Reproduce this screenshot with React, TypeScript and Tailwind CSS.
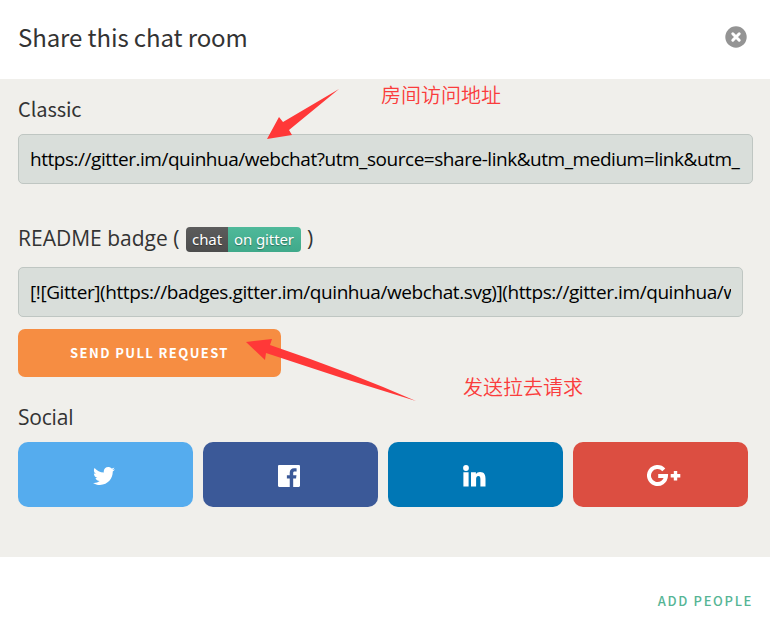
import type { ReactNode } from 'react';
import { FaTwitter } from 'react-icons/fa';

const heading = 'font-["Noto_Sans_CJK_SC",sans-serif]';
const ui = 'font-["Open_Sans","Noto_Sans",sans-serif]';

function ShareField({ value, className }: { value: string; className: string }) {
  return (
    <div className={`h-[50px] rounded-[5px] border border-[#bfc6c2] bg-[#d9deda] px-[11px] ${className}`}>
      <div className={`${ui} overflow-hidden whitespace-nowrap leading-[48px] text-black`}>{value}</div>
    </div>
  );
}

function SocialButton({ color, label, children }: { color: string; label: string; children: ReactNode }) {
  return (
    <button aria-label={label} className={`flex h-[65px] w-[175px] items-center justify-center rounded-[10px] text-white ${color}`}>
      {children}
    </button>
  );
}

export default function App() {
  return (
    <div className="relative flex h-[631px] w-[770px] flex-col overflow-hidden bg-white text-[#333]">
      <header className="flex h-[79px] items-center justify-between pr-[23px] pl-[18px] pb-[5px]">
        <h1 className={`${heading} text-[24px] leading-8 font-normal tracking-[-0.1px]`}>Share this chat room</h1>
        <button aria-label="Close">
          <svg width="22" height="22" viewBox="0 0 22 22">
            <circle cx="11" cy="11" r="10.7" fill="#949494" />
            <path d="M7.8 7.8l6.4 6.4M14.2 7.8l-6.4 6.4" stroke="#fff" strokeWidth="3" strokeLinecap="round" />
          </svg>
        </button>
      </header>

      <main className="h-[478px] bg-[#f0efeb] px-[18px] pt-[14px]">
        <h2 className={`${heading} h-[41px] text-[20px] leading-8 tracking-[-0.1px]`}>Classic</h2>
        <ShareField className="w-[735px] text-[19px] tracking-[-0.46px]" value="https://gitter.im/quinhua/webchat?utm_source=share-link&utm_medium=link&utm_" />

        <h2 className={`${ui} mt-[38px] flex h-[45px] items-start text-[21px] leading-8`}>
          <span className="w-[168px] whitespace-nowrap">README badge (</span>
          <span className="mt-[5px] flex h-[25px] overflow-hidden rounded-[4px] font-['Noto_Sans',sans-serif] text-[15px] leading-[25px] tracking-[-0.1px] text-white [text-shadow:0_1px_1px_rgba(0,0,0,0.35)]">
            <span className="w-[42px] bg-linear-to-b from-[#5c5c5c] to-[#4d4d4d] text-center">chat</span>
            <span className="w-[73px] bg-linear-to-b from-[#4fb99a] to-[#40a98a] pr-px text-center">on gitter</span>
          </span>
          <span className="ml-1.5">)</span>
        </h2>
        <ShareField className="w-[725px] text-[19px] tracking-[-0.42px]" value="[![Gitter](https://badges.gitter.im/quinhua/webchat.svg)](https://gitter.im/quinhua/w" />

        <button className={`${heading} mt-3 block h-[48px] w-[263px] rounded-[7px] bg-[#f68d42] pb-px text-[13px] font-bold tracking-[1.4px] text-white`}>
          SEND PULL REQUEST
        </button>

        <h2 className={`${ui} mt-6 h-[41px] text-[21px] leading-8 tracking-[-0.2px]`}>Social</h2>
        <div className="flex gap-2.5">
          <SocialButton color="bg-[#55acee]" label="Twitter"><FaTwitter className="relative top-px -left-[1.5px] size-[22px]" /></SocialButton>
          <SocialButton color="bg-[#3b5998]" label="Facebook">
            <svg className="relative top-px -left-[1.5px] size-[22px] fill-current" viewBox="0 0 24 24">
              <path d="M22.676 0H1.324C.593 0 0 .593 0 1.324v21.352C0 23.408.593 24 1.324 24h11.494v-9.294H9.689v-3.621h3.129V8.41c0-3.099 1.894-4.785 4.659-4.785 1.325 0 2.464.097 2.796.141v3.24h-1.921c-1.5 0-1.792.721-1.792 1.771v2.311h3.584l-.465 3.63H16.56V24h6.115c.733 0 1.325-.592 1.325-1.324V1.324C24 .593 23.408 0 22.676 0" />
            </svg>
          </SocialButton>
          <SocialButton color="bg-[#0077b5]" label="LinkedIn">
            <svg className="relative top-px -left-[1px] h-[22px] w-[23px] fill-current" viewBox="0 0 23 22">
              <circle cx="3" cy="3" r="2.9" />
              <path d="M.4 7.2h5.2V21.5H.4zM8 7.2h4.9v2c.8-1.4 2.3-2.3 4.1-2.3 4.4 0 5.5 2.8 5.5 6.8v7.8h-5.1v-7c0-1.9-.3-3.4-2-3.4-1.8 0-2.3 1.4-2.3 3.3v7.1H8z" />
            </svg>
          </SocialButton>
          <SocialButton color="bg-[#dc4e41]" label="Google Plus">
            <svg className="relative top-px left-[3px] h-[22px] w-[34px]" viewBox="0 0 34 22">
              <path d="M16.8 4.8A8.5 8.5 0 1 0 19 11H11.2" fill="none" stroke="#fff" strokeWidth="4" />
              <path d="M28.5 6v9.6M23.7 10.8h9.6" stroke="#fff" strokeWidth="3.4" />
            </svg>
          </SocialButton>
        </div>
      </main>

      <footer className="flex flex-1 items-center justify-end pt-[14px] pr-[17px]">
        <button className={`${heading} text-[13px] font-medium tracking-[1.65px] text-[#56b595]`}>ADD PEOPLE</button>
      </footer>

      <svg className="pointer-events-none absolute inset-0" width="770" height="631" viewBox="0 0 770 631" fill="#ff3838">
        <path d="M339 89L289 130L292 135L267 139L279 117L283 122Z" />
        <path d="M246 342L272 339L270 345Q350 372 416 401Q340 378 266 353L265 360Z" />
      </svg>
      <span className={`${heading} absolute top-[80px] left-[381px] text-[20px] leading-[30px] font-[350] text-[#fa3c3c]`}>房间访问地址</span>
      <span className={`${heading} absolute top-[372px] left-[463px] text-[20px] leading-[30px] font-[350] text-[#fa3c3c]`}>发送拉去请求</span>
    </div>
  );
}
